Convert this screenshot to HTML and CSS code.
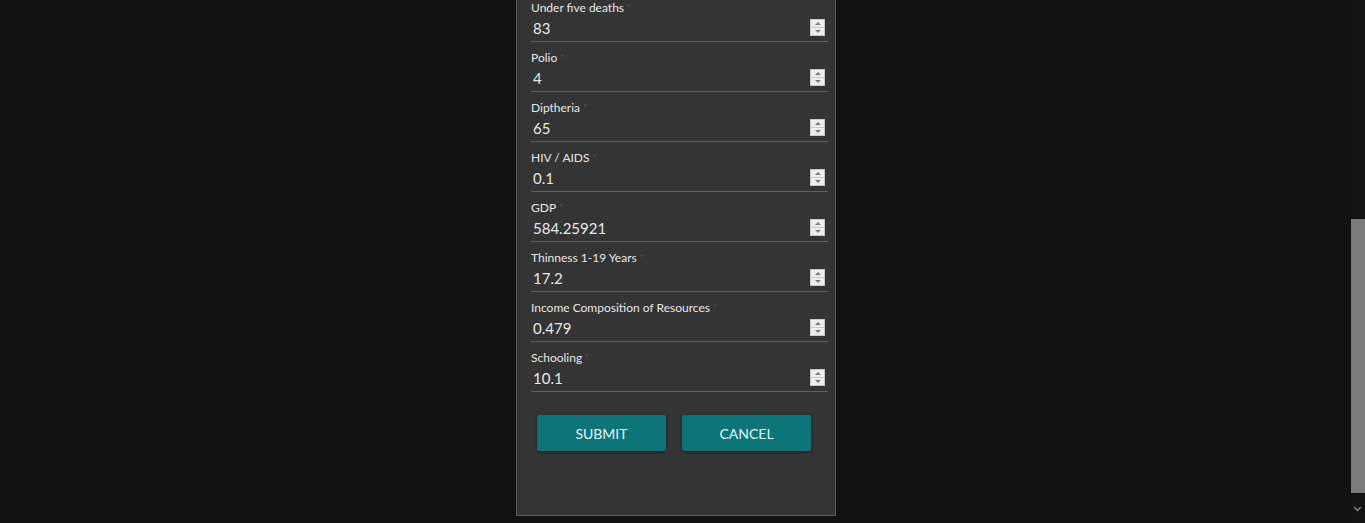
FILE: index.html
```html
<!DOCTYPE html>
<html>
<head>
<meta charset="utf-8">
<link rel="stylesheet" href="styles.css">
</head>
<body>
<div class="page">
  <main class="main">
    <form class="panel">
      <div class="field"><label class="label">Under five deaths<span class="req">*</span></label><div class="inp"><span class="val">83</span><span class="spin"><i class="up"></i><i class="dn"></i></span></div></div>
      <div class="field"><label class="label">Polio<span class="req">*</span></label><div class="inp"><span class="val">4</span><span class="spin"><i class="up"></i><i class="dn"></i></span></div></div>
      <div class="field"><label class="label">Diptheria<span class="req">*</span></label><div class="inp"><span class="val">65</span><span class="spin"><i class="up"></i><i class="dn"></i></span></div></div>
      <div class="field"><label class="label">HIV / AIDS<span class="req">*</span></label><div class="inp"><span class="val">0.1</span><span class="spin"><i class="up"></i><i class="dn"></i></span></div></div>
      <div class="field"><label class="label">GDP<span class="req">*</span></label><div class="inp"><span class="val">584.25921</span><span class="spin"><i class="up"></i><i class="dn"></i></span></div></div>
      <div class="field"><label class="label">Thinness 1-19 Years<span class="req">*</span></label><div class="inp"><span class="val">17.2</span><span class="spin"><i class="up"></i><i class="dn"></i></span></div></div>
      <div class="field"><label class="label">Income Composition of Resources<span class="req">*</span></label><div class="inp"><span class="val">0.479</span><span class="spin"><i class="up"></i><i class="dn"></i></span></div></div>
      <div class="field"><label class="label">Schooling<span class="req">*</span></label><div class="inp"><span class="val">10.1</span><span class="spin"><i class="up"></i><i class="dn"></i></span></div></div>
      <div class="actions">
        <button type="button" class="btn">SUBMIT</button>
        <button type="button" class="btn">CANCEL</button>
      </div>
    </form>
  </main>
  <div class="scrollbar">
    <div class="track"><div class="thumb"></div></div>
    <div class="arrow"><svg width="9" height="6" viewBox="0 0 9 6"><path d="M1 1 L4.5 4.5 L8 1" fill="none" stroke="#8a8a8a" stroke-width="1.3"/></svg></div>
  </div>
</div>
</body>
</html>
```
FILE: styles.css
```css
html, body {
  margin: 0;
  padding: 0;
  height: 100%;
  background: #111111;
  overflow: hidden;
}
body {
  font-family: Lato, "Open Sans", sans-serif;
}
.page {
  display: flex;
  height: 523px;
}
.main {
  flex: 1;
  display: flex;
  justify-content: center;
  align-items: flex-start;
}
.panel {
  width: 320px;
  height: 516px;
  box-sizing: border-box;
  background: #343434;
  border: 1px solid #5a5a5a;
  border-top: none;
  padding: 0 8px 0 14px;
  margin-left: 2px;
  display: flex;
  flex-direction: column;
}
.field {
  height: 50px;
  display: flex;
  flex-direction: column;
}
.label {
  font-size: 12px;
  line-height: 15px;
  color: #e6e6e6;
  margin-top: 0;
}
.req {
  color: #555555;
  font-size: 9px;
  margin-left: 3px;
  vertical-align: top;
}
.inp {
  height: 26px;
  border-bottom: 1px solid #1b7c7b;
  display: flex;
  align-items: center;
  justify-content: space-between;
  padding-left: 2px;
  margin-right: -1px;
}
.val {
  font-size: 15px;
  color: #e8e8e8;
  margin-top: -1px;
}
.spin {
  width: 15px;
  height: 17px;
  box-sizing: border-box;
  border: 1px solid #c8c8c8;
  background: #eeeeee;
  margin-right: 3px;
  margin-top: -1px;
  display: flex;
  flex-direction: column;
}
.spin i {
  flex: 1;
  display: flex;
  align-items: center;
  justify-content: center;
}
.spin .up { border-bottom: 1px solid #c8c8c8; }
.spin .up::before {
  content: "";
  border-left: 3px solid transparent;
  border-right: 3px solid transparent;
  border-bottom: 3px solid #7a7a8a;
}
.spin .dn::before {
  content: "";
  border-left: 3px solid transparent;
  border-right: 3px solid transparent;
  border-top: 3px solid #7a7a8a;
}
.actions {
  display: flex;
  gap: 16px;
  margin-top: 14px;
  padding-left: 6px;
}
.btn {
  width: 129px;
  height: 36px;
  background: #0d7477;
  color: #e6f4f4;
  border: none;
  border-radius: 2px;
  box-shadow: 0 1px 3px rgba(0,0,0,0.45);
  font-family: Lato, "Open Sans", sans-serif;
  font-size: 14px;
  padding: 0;
  margin-top: 1px;
}
.scrollbar {
  width: 15px;
  display: flex;
  flex-direction: column;
  background: #121212;
}
.track {
  flex: 1;
  padding-top: 219px;
  padding-bottom: 6px;
  display: flex;
}
.thumb {
  flex: 1;
  margin-left: 1px;
  background: #7b7b7b;
}
.arrow {
  height: 20px;
  display: flex;
  justify-content: center;
  align-items: center;
  padding-bottom: 4px;
}
```
